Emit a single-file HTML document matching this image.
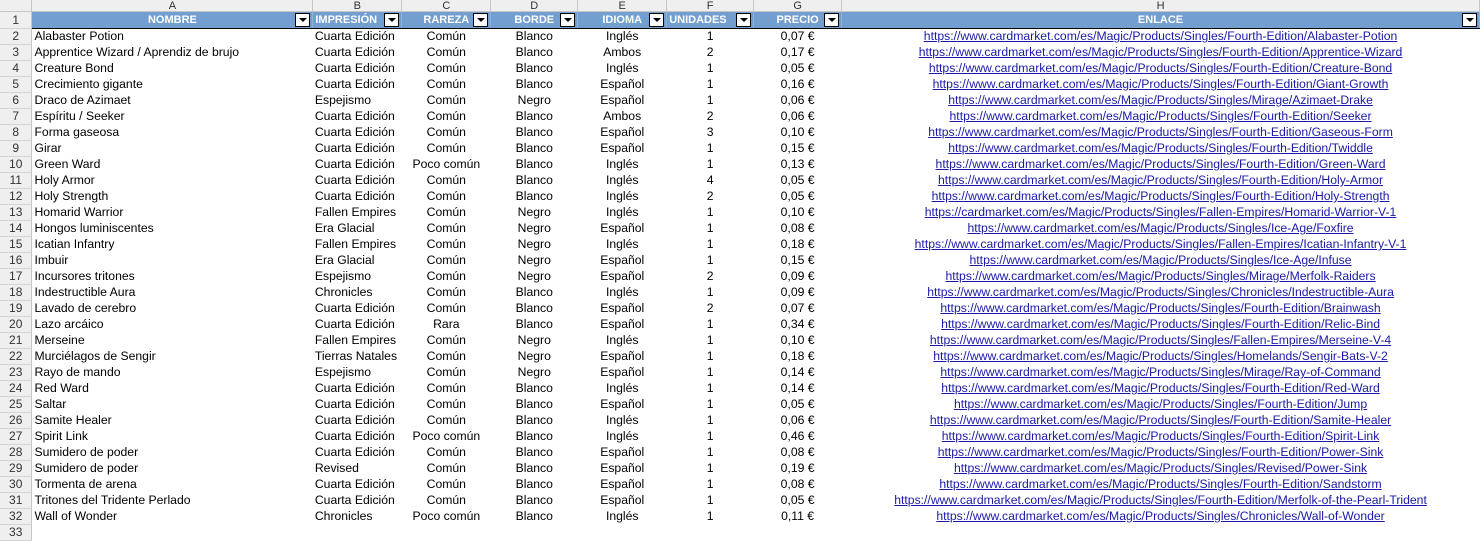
<!DOCTYPE html>
<html><head><meta charset="utf-8"><style>
body{margin:0;background:#fff;font-family:"Liberation Sans",Arial,sans-serif;font-size:12.2px;overflow:hidden;width:1480px;height:537px}
table{border-collapse:collapse;table-layout:fixed;position:absolute;left:0;top:0}
td{padding:0 2px;height:15px;line-height:15px;white-space:nowrap;overflow:hidden;color:#000}
tr.ch td{height:11px;line-height:10px;background:#efefef;border-right:1px solid #c6c6c6;border-bottom:1px solid #c6c6c6;text-align:center;color:#333;font-size:11px}
td.rh{background:#efefef;border-right:1px solid #c6c6c6;border-bottom:1px solid #d4d4d4;text-align:center;color:#333;padding:0;font-size:12px}
tr.hd td{height:16px;line-height:16px}
tr.hd td.h{background:#729fcf;color:#fff;font-weight:bold;font-size:11px;text-align:center;position:relative;border-bottom:1px solid #000;border-right:1px solid #8fb2d9}
.f{position:absolute;right:2px;top:1px;width:13px;height:12px;background:#fff;border:1px solid #000}
.f:after{content:"";position:absolute;left:3px;top:4px;border-left:4px solid transparent;border-right:4px solid transparent;border-top:4px solid #000}
.c{text-align:center}
a{color:#1a1aa6;text-decoration:underline}
</style></head><body>
<table>
<colgroup><col style="width:32px"><col style="width:281px"><col style="width:89px"><col style="width:89px"><col style="width:87px"><col style="width:89px"><col style="width:87px"><col style="width:88px"><col style="width:638px"></colgroup>
<tr class="ch"><td></td><td>A</td><td>B</td><td>C</td><td>D</td><td>E</td><td>F</td><td>G</td><td>H</td></tr>
<tr class="hd"><td class="rh">1</td><td class="h">NOMBRE<span class="f"></span></td><td class="h" style="text-align:left">IMPRESIÓN<span class="f"></span></td><td class="h">RAREZA<span class="f"></span></td><td class="h">BORDE<span class="f"></span></td><td class="h">IDIOMA<span class="f"></span></td><td class="h" style="text-align:left">UNIDADES<span class="f"></span></td><td class="h">PRECIO<span class="f"></span></td><td class="h">ENLACE<span class="f"></span></td></tr>
<tr><td class="rh">2</td><td>Alabaster Potion</td><td>Cuarta Edición</td><td class="c">Común</td><td class="c">Blanco</td><td class="c">Inglés</td><td class="c">1</td><td class="c">0,07 €</td><td class="c"><a>https://www.cardmarket.com/es/Magic/Products/Singles/Fourth-Edition/Alabaster-Potion</a></td></tr>
<tr><td class="rh">3</td><td>Apprentice Wizard / Aprendiz de brujo</td><td>Cuarta Edición</td><td class="c">Común</td><td class="c">Blanco</td><td class="c">Ambos</td><td class="c">2</td><td class="c">0,17 €</td><td class="c"><a>https://www.cardmarket.com/es/Magic/Products/Singles/Fourth-Edition/Apprentice-Wizard</a></td></tr>
<tr><td class="rh">4</td><td>Creature Bond</td><td>Cuarta Edición</td><td class="c">Común</td><td class="c">Blanco</td><td class="c">Inglés</td><td class="c">1</td><td class="c">0,05 €</td><td class="c"><a>https://www.cardmarket.com/es/Magic/Products/Singles/Fourth-Edition/Creature-Bond</a></td></tr>
<tr><td class="rh">5</td><td>Crecimiento gigante</td><td>Cuarta Edición</td><td class="c">Común</td><td class="c">Blanco</td><td class="c">Español</td><td class="c">1</td><td class="c">0,16 €</td><td class="c"><a>https://www.cardmarket.com/es/Magic/Products/Singles/Fourth-Edition/Giant-Growth</a></td></tr>
<tr><td class="rh">6</td><td>Draco de Azimaet</td><td>Espejismo</td><td class="c">Común</td><td class="c">Negro</td><td class="c">Español</td><td class="c">1</td><td class="c">0,06 €</td><td class="c"><a>https://www.cardmarket.com/es/Magic/Products/Singles/Mirage/Azimaet-Drake</a></td></tr>
<tr><td class="rh">7</td><td>Espíritu / Seeker</td><td>Cuarta Edición</td><td class="c">Común</td><td class="c">Blanco</td><td class="c">Ambos</td><td class="c">2</td><td class="c">0,06 €</td><td class="c"><a>https://www.cardmarket.com/es/Magic/Products/Singles/Fourth-Edition/Seeker</a></td></tr>
<tr><td class="rh">8</td><td>Forma gaseosa</td><td>Cuarta Edición</td><td class="c">Común</td><td class="c">Blanco</td><td class="c">Español</td><td class="c">3</td><td class="c">0,10 €</td><td class="c"><a>https://www.cardmarket.com/es/Magic/Products/Singles/Fourth-Edition/Gaseous-Form</a></td></tr>
<tr><td class="rh">9</td><td>Girar</td><td>Cuarta Edición</td><td class="c">Común</td><td class="c">Blanco</td><td class="c">Español</td><td class="c">1</td><td class="c">0,15 €</td><td class="c"><a>https://www.cardmarket.com/es/Magic/Products/Singles/Fourth-Edition/Twiddle</a></td></tr>
<tr><td class="rh">10</td><td>Green Ward</td><td>Cuarta Edición</td><td class="c">Poco común</td><td class="c">Blanco</td><td class="c">Inglés</td><td class="c">1</td><td class="c">0,13 €</td><td class="c"><a>https://www.cardmarket.com/es/Magic/Products/Singles/Fourth-Edition/Green-Ward</a></td></tr>
<tr><td class="rh">11</td><td>Holy Armor</td><td>Cuarta Edición</td><td class="c">Común</td><td class="c">Blanco</td><td class="c">Inglés</td><td class="c">4</td><td class="c">0,05 €</td><td class="c"><a>https://www.cardmarket.com/es/Magic/Products/Singles/Fourth-Edition/Holy-Armor</a></td></tr>
<tr><td class="rh">12</td><td>Holy Strength</td><td>Cuarta Edición</td><td class="c">Común</td><td class="c">Blanco</td><td class="c">Inglés</td><td class="c">2</td><td class="c">0,05 €</td><td class="c"><a>https://www.cardmarket.com/es/Magic/Products/Singles/Fourth-Edition/Holy-Strength</a></td></tr>
<tr><td class="rh">13</td><td>Homarid Warrior</td><td>Fallen Empires</td><td class="c">Común</td><td class="c">Negro</td><td class="c">Inglés</td><td class="c">1</td><td class="c">0,10 €</td><td class="c"><a>https://cardmarket.com/es/Magic/Products/Singles/Fallen-Empires/Homarid-Warrior-V-1</a></td></tr>
<tr><td class="rh">14</td><td>Hongos luminiscentes</td><td>Era Glacial</td><td class="c">Común</td><td class="c">Negro</td><td class="c">Español</td><td class="c">1</td><td class="c">0,08 €</td><td class="c"><a>https://www.cardmarket.com/es/Magic/Products/Singles/Ice-Age/Foxfire</a></td></tr>
<tr><td class="rh">15</td><td>Icatian Infantry</td><td>Fallen Empires</td><td class="c">Común</td><td class="c">Negro</td><td class="c">Inglés</td><td class="c">1</td><td class="c">0,18 €</td><td class="c"><a>https://www.cardmarket.com/es/Magic/Products/Singles/Fallen-Empires/Icatian-Infantry-V-1</a></td></tr>
<tr><td class="rh">16</td><td>Imbuir</td><td>Era Glacial</td><td class="c">Común</td><td class="c">Negro</td><td class="c">Español</td><td class="c">1</td><td class="c">0,15 €</td><td class="c"><a>https://www.cardmarket.com/es/Magic/Products/Singles/Ice-Age/Infuse</a></td></tr>
<tr><td class="rh">17</td><td>Incursores tritones</td><td>Espejismo</td><td class="c">Común</td><td class="c">Negro</td><td class="c">Español</td><td class="c">2</td><td class="c">0,09 €</td><td class="c"><a>https://www.cardmarket.com/es/Magic/Products/Singles/Mirage/Merfolk-Raiders</a></td></tr>
<tr><td class="rh">18</td><td>Indestructible Aura</td><td>Chronicles</td><td class="c">Común</td><td class="c">Blanco</td><td class="c">Inglés</td><td class="c">1</td><td class="c">0,09 €</td><td class="c"><a>https://www.cardmarket.com/es/Magic/Products/Singles/Chronicles/Indestructible-Aura</a></td></tr>
<tr><td class="rh">19</td><td>Lavado de cerebro</td><td>Cuarta Edición</td><td class="c">Común</td><td class="c">Blanco</td><td class="c">Español</td><td class="c">2</td><td class="c">0,07 €</td><td class="c"><a>https://www.cardmarket.com/es/Magic/Products/Singles/Fourth-Edition/Brainwash</a></td></tr>
<tr><td class="rh">20</td><td>Lazo arcáico</td><td>Cuarta Edición</td><td class="c">Rara</td><td class="c">Blanco</td><td class="c">Español</td><td class="c">1</td><td class="c">0,34 €</td><td class="c"><a>https://www.cardmarket.com/es/Magic/Products/Singles/Fourth-Edition/Relic-Bind</a></td></tr>
<tr><td class="rh">21</td><td>Merseine</td><td>Fallen Empires</td><td class="c">Común</td><td class="c">Negro</td><td class="c">Inglés</td><td class="c">1</td><td class="c">0,10 €</td><td class="c"><a>https://www.cardmarket.com/es/Magic/Products/Singles/Fallen-Empires/Merseine-V-4</a></td></tr>
<tr><td class="rh">22</td><td>Murciélagos de Sengir</td><td>Tierras Natales</td><td class="c">Común</td><td class="c">Negro</td><td class="c">Español</td><td class="c">1</td><td class="c">0,18 €</td><td class="c"><a>https://www.cardmarket.com/es/Magic/Products/Singles/Homelands/Sengir-Bats-V-2</a></td></tr>
<tr><td class="rh">23</td><td>Rayo de mando</td><td>Espejismo</td><td class="c">Común</td><td class="c">Negro</td><td class="c">Español</td><td class="c">1</td><td class="c">0,14 €</td><td class="c"><a>https://www.cardmarket.com/es/Magic/Products/Singles/Mirage/Ray-of-Command</a></td></tr>
<tr><td class="rh">24</td><td>Red Ward</td><td>Cuarta Edición</td><td class="c">Común</td><td class="c">Blanco</td><td class="c">Inglés</td><td class="c">1</td><td class="c">0,14 €</td><td class="c"><a>https://www.cardmarket.com/es/Magic/Products/Singles/Fourth-Edition/Red-Ward</a></td></tr>
<tr><td class="rh">25</td><td>Saltar</td><td>Cuarta Edición</td><td class="c">Común</td><td class="c">Blanco</td><td class="c">Español</td><td class="c">1</td><td class="c">0,05 €</td><td class="c"><a>https://www.cardmarket.com/es/Magic/Products/Singles/Fourth-Edition/Jump</a></td></tr>
<tr><td class="rh">26</td><td>Samite Healer</td><td>Cuarta Edición</td><td class="c">Común</td><td class="c">Blanco</td><td class="c">Inglés</td><td class="c">1</td><td class="c">0,06 €</td><td class="c"><a>https://www.cardmarket.com/es/Magic/Products/Singles/Fourth-Edition/Samite-Healer</a></td></tr>
<tr><td class="rh">27</td><td>Spirit Link</td><td>Cuarta Edición</td><td class="c">Poco común</td><td class="c">Blanco</td><td class="c">Inglés</td><td class="c">1</td><td class="c">0,46 €</td><td class="c"><a>https://www.cardmarket.com/es/Magic/Products/Singles/Fourth-Edition/Spirit-Link</a></td></tr>
<tr><td class="rh">28</td><td>Sumidero de poder</td><td>Cuarta Edición</td><td class="c">Común</td><td class="c">Blanco</td><td class="c">Español</td><td class="c">1</td><td class="c">0,08 €</td><td class="c"><a>https://www.cardmarket.com/es/Magic/Products/Singles/Fourth-Edition/Power-Sink</a></td></tr>
<tr><td class="rh">29</td><td>Sumidero de poder</td><td>Revised</td><td class="c">Común</td><td class="c">Blanco</td><td class="c">Español</td><td class="c">1</td><td class="c">0,19 €</td><td class="c"><a>https://www.cardmarket.com/es/Magic/Products/Singles/Revised/Power-Sink</a></td></tr>
<tr><td class="rh">30</td><td>Tormenta de arena</td><td>Cuarta Edición</td><td class="c">Común</td><td class="c">Blanco</td><td class="c">Español</td><td class="c">1</td><td class="c">0,08 €</td><td class="c"><a>https://www.cardmarket.com/es/Magic/Products/Singles/Fourth-Edition/Sandstorm</a></td></tr>
<tr><td class="rh">31</td><td>Tritones del Tridente Perlado</td><td>Cuarta Edición</td><td class="c">Común</td><td class="c">Blanco</td><td class="c">Español</td><td class="c">1</td><td class="c">0,05 €</td><td class="c"><a>https://www.cardmarket.com/es/Magic/Products/Singles/Fourth-Edition/Merfolk-of-the-Pearl-Trident</a></td></tr>
<tr><td class="rh">32</td><td>Wall of Wonder</td><td>Chronicles</td><td class="c">Poco común</td><td class="c">Blanco</td><td class="c">Inglés</td><td class="c">1</td><td class="c">0,11 €</td><td class="c"><a>https://www.cardmarket.com/es/Magic/Products/Singles/Chronicles/Wall-of-Wonder</a></td></tr>
<tr><td class="rh">33</td><td></td><td></td><td></td><td></td><td></td><td></td><td></td><td></td></tr>
</table>
</body></html>
